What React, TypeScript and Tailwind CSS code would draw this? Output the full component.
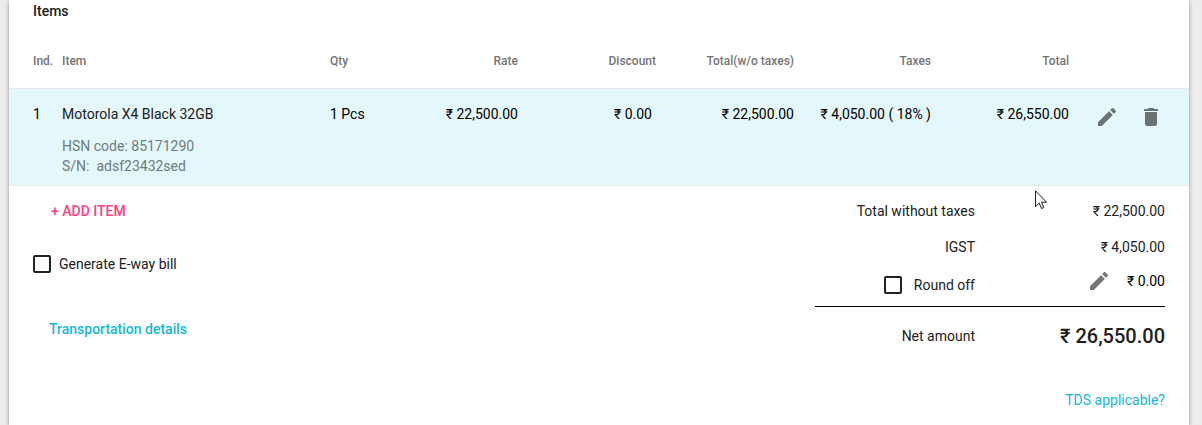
import React, { useState } from 'react';

const items = [
  {
    name: 'Motorola X4 Black 32GB',
    hsn: '85171290',
    serial: 'adsf23432sed',
    qty: '1 Pcs',
    rate: '₹ 22,500.00',
    discount: '₹ 0.00',
    net: '₹ 22,500.00',
    taxes: '₹ 4,050.00 ( 18% )',
    total: '₹ 26,550.00',
  },
];

function PencilIcon() {
  return (
    <svg className="w-6 h-6" viewBox="0 0 24 24" fill="currentColor">
      <path d="M3 17.25V21h3.75L17.81 9.94l-3.75-3.75L3 17.25zM20.71 7.04c.39-.39.39-1.02 0-1.41l-2.34-2.34c-.39-.39-1.02-.39-1.41 0l-1.83 1.83 3.75 3.75 1.83-1.83z" />
    </svg>
  );
}

function TrashIcon() {
  return (
    <svg className="w-6 h-6" viewBox="0 0 24 24" fill="currentColor">
      <path d="M6 19c0 1.1.9 2 2 2h8c1.1 0 2-.9 2-2V7H6v12zM19 4h-3.5l-1-1h-5l-1 1H5v2h14V4z" />
    </svg>
  );
}

type CheckboxProps = {
  id: string;
  checked: boolean;
  onChange: (checked: boolean) => void;
};

function Checkbox({ id, checked, onChange }: CheckboxProps) {
  return (
    <input
      id={id}
      type="checkbox"
      checked={checked}
      onChange={(e) => onChange(e.target.checked)}
      className="appearance-none shrink-0 w-[18px] h-[18px] border-2 border-[#212121] rounded-xs checked:bg-[#212121]"
    />
  );
}

export default function App() {
  const [ewayBill, setEwayBill] = useState(false);
  const [roundOff, setRoundOff] = useState(false);

  return (
    <div className="min-h-screen flex overflow-hidden bg-[#ececec] pl-[9px] pr-[13px] font-['Roboto','Noto_Sans',sans-serif] text-sm leading-5 text-[#212121]">
      <div className="flex-1 min-w-0 bg-white shadow-[0_1px_4px_rgba(0,0,0,0.4)]">
        <h2 className="px-6 pt-px font-medium">Items</h2>

        {/* Items table */}
        <table className="w-full table-fixed mt-3.5 text-left">
          <colgroup>
            <col className="w-[53px]" />
            <col />
            <col className="w-[51px]" />
            <col className="w-[137px]" />
            <col className="w-[138px]" />
            <col className="w-[138px]" />
            <col className="w-[137px]" />
            <col className="w-[138px]" />
            <col className="w-[120px]" />
          </colgroup>
          <thead>
            <tr className="h-[53px] border-b border-[#e8e8e8] text-xs text-[#757575] whitespace-nowrap">
              <th className="pl-6 font-medium">Ind.</th>
              <th className="font-medium">Item</th>
              <th className="font-medium">Qty</th>
              <th className="font-medium text-right">Rate</th>
              <th className="font-medium text-right">Discount</th>
              <th className="font-medium text-right">Total(w/o taxes)</th>
              <th className="font-medium text-right">Taxes</th>
              <th className="font-medium text-right">Total</th>
              <td></td>
            </tr>
          </thead>
          <tbody>
            {items.map((item, index) => (
              <tr key={item.serial} className="bg-[#e4f7fb] border-b border-[#e8e8e8] align-top whitespace-nowrap text-black">
                <td className="pl-6 pt-[15px]">{index + 1}</td>
                <td className="pt-[15px] pb-[9px]">
                  <p className="text-[#212121]">{item.name}</p>
                  <p className="mt-3 text-[#6f7b7d]">HSN code: {item.hsn}</p>
                  <p className="text-[#6f7b7d]">S/N:&nbsp; {item.serial}</p>
                </td>
                <td className="pt-[15px]">{item.qty}</td>
                <td className="pt-[15px] text-right">{item.rate}</td>
                <td className="pt-[15px] pr-1 text-right">{item.discount}</td>
                <td className="pt-[15px] text-right">{item.net}</td>
                <td className="pt-[15px] text-right">{item.taxes}</td>
                <td className="pt-[15px] text-right">{item.total}</td>
                <td className="pt-4 pl-[26px] text-[#6a7274]">
                  <div className="flex gap-5">
                    <button type="button" aria-label="Edit item"><PencilIcon /></button>
                    <button type="button" aria-label="Delete item"><TrashIcon /></button>
                  </div>
                </td>
              </tr>
            ))}
          </tbody>
        </table>

        <div className="relative flex justify-between px-6">
          {/* Left side actions */}
          <div className="flex flex-col items-start pt-[15px]">
            <button type="button" className="ml-[18px] font-medium text-[#ff4081]">+ ADD ITEM</button>
            <div className="flex items-center gap-2 mt-[33px]">
              <Checkbox id="eway" checked={ewayBill} onChange={setEwayBill} />
              <label htmlFor="eway">Generate E-way bill</label>
            </div>
            <button type="button" className="ml-4 mt-[45px] font-medium text-[#17b8d4]">Transportation details</button>
          </div>

          {/* Totals */}
          <div className="w-[350px] pt-[7px] text-right">
            <div className="flex items-center h-9">
              <span className="w-40">Total without taxes</span>
              <span className="flex-1">₹ 22,500.00</span>
            </div>
            <div className="flex items-center h-9">
              <span className="w-40">IGST</span>
              <span className="flex-1">₹ 4,050.00</span>
            </div>
            <div className="flex items-start h-[42px] pt-1 border-b border-black">
              <div className="flex items-center justify-end gap-3 w-40 h-8">
                <Checkbox id="round-off" checked={roundOff} onChange={setRoundOff} />
                <label htmlFor="round-off">Round off</label>
              </div>
              <div className="flex flex-1 items-center justify-end gap-4 h-6">
                <button type="button" aria-label="Edit round off" className="text-[#757575]"><PencilIcon /></button>
                <span className="text-black">₹ 0.00</span>
              </div>
            </div>
            <div className="flex items-center h-[58px]">
              <span className="w-40">Net amount</span>
              <span className="flex-1 text-xl font-medium">₹ 26,550.00</span>
            </div>
            <a href="#tds" className="inline-block mt-[25px] text-[#17b8d4]">TDS applicable?</a>
          </div>

          {/* Mouse pointer */}
          <svg className="absolute top-1 right-[142px] w-3 h-5 pointer-events-none" viewBox="0 0 12 20">
            <path d="M.5.8v15.9l3.7-3.6 2.3 5.4 2.3-1-2.3-5.3h5z" fill="#fff" stroke="#1a1a24" strokeWidth="1" />
          </svg>
        </div>
      </div>
    </div>
  );
}
